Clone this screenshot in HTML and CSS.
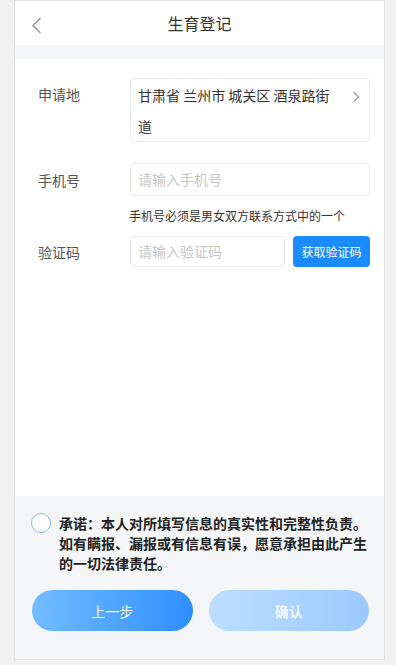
FILE: index.html
```html
<!DOCTYPE html>
<html lang="zh-CN">
<head>
  <meta charset="UTF-8" />
  <title>生育登记</title>
  <meta name="viewport" content="width=device-width, initial-scale=1.0" />
  <link rel="stylesheet" href="styles.css">
</head>
<body>
  <div class="phone">
    <div class="nav-bar">
      <span class="back">
        <svg width="12" height="17" viewBox="0 0 12 17"><path d="M10 1.5 L3 8.5 L10 15.5" fill="none" stroke="#9a9a9a" stroke-width="1.6" stroke-linecap="round" stroke-linejoin="round"/></svg>
      </span>
      <h1>生育登记</h1>
    </div>
    <div class="spacer"></div>

    <div class="form">
      <div class="row">
        <div class="label label-top">申请地</div>
        <div class="field address">
          <span class="address-text">甘肃省 兰州市 城关区 酒泉路街道</span>
          <svg class="arrow" width="8" height="12" viewBox="0 0 8 12"><path d="M2 1.5 L6.5 6 L2 10.5" fill="none" stroke="#a0a0a0" stroke-width="1.3" stroke-linecap="round" stroke-linejoin="round"/></svg>
        </div>
      </div>

      <div class="row row-phone">
        <div class="label">手机号</div>
        <div class="field input">请输入手机号</div>
      </div>
      <div class="hint">手机号必须是男女双方联系方式中的一个</div>

      <div class="row row-code">
        <div class="label">验证码</div>
        <div class="field input code-input">请输入验证码</div>
        <button class="code-btn">获取验证码</button>
      </div>
    </div>

    <div class="footer">
      <div class="promise">
        <span class="radio"></span>
        <p>承诺：本人对所填写信息的真实性和完整性负责。如有瞒报、漏报或有信息有误，愿意承担由此产生的一切法律责任。</p>
      </div>
      <div class="actions">
        <button class="btn btn-prev">上一步</button>
        <button class="btn btn-ok">确认</button>
      </div>
    </div>
  </div>
</body>
</html>
```

FILE: styles.css
```css
body {
  margin: 0;
  background: #f1f1f1;
  font-family: "Noto Sans CJK SC", "Noto Sans", sans-serif;
  color: #333;
}

.phone {
  width: 369px;
  height: 658px;
  margin-left: 14px;
  border: 1px solid #e2e2e2;
  background: #fff;
  display: flex;
  flex-direction: column;
}

.nav-bar {
  height: 44px;
  display: flex;
  align-items: center;
  justify-content: center;
  position: relative;
}

.back {
  position: absolute;
  left: 15px;
  top: 16px;
  display: flex;
}

.nav-bar h1 {
  margin: 0;
  font-size: 16px;
  font-weight: normal;
  color: #333;
}

.spacer {
  height: 14px;
  background: #f5f6f8;
}

.form {
  flex: 1;
  padding: 19px 14px 0 23px;
}

.row {
  display: flex;
  align-items: center;
}

.label {
  width: 92px;
  flex-shrink: 0;
  font-size: 14px;
  color: #555;
}

.row:first-child {
  align-items: flex-start;
}

.label-top {
  line-height: 31px;
  padding-top: 1px;
}

.field {
  flex: 1;
  box-sizing: border-box;
  border: 1px solid #ebebeb;
  border-radius: 4px;
  font-size: 14px;
}

.address {
  height: 64px;
  padding: 1px 30px 0 7px;
  line-height: 31px;
  color: #333;
  position: relative;
}

.address-text {
  display: block;
}

.arrow {
  position: absolute;
  right: 9px;
  top: 12px;
}

.row-phone {
  margin-top: 21px;
}

.input {
  height: 33px;
  line-height: 31px;
  padding-left: 7px;
  color: #c6c6c6;
}

.hint {
  margin: 12px 0 0 91px;
  font-size: 12px;
  line-height: 16px;
  color: #333;
}

.row-code {
  margin-top: 12px;
}

.code-input {
  height: 31px;
  line-height: 29px;
}

.code-btn {
  width: 77px;
  height: 31px;
  margin-left: 8px;
  border: none;
  border-radius: 4px;
  background: #1a8cff;
  color: #fff;
  font-family: inherit;
  font-size: 12px;
  padding: 0;
}

.footer {
  height: 163px;
  box-sizing: border-box;
  background: #f5f6f8;
  padding: 17px 15px 0 16px;
}

.promise {
  display: flex;
  align-items: flex-start;
}

.radio {
  flex-shrink: 0;
  width: 20px;
  height: 20px;
  box-sizing: border-box;
  border: 1.5px solid #7db9ff;
  border-radius: 50%;
  background: #fff;
  margin-top: 0;
}

.promise p {
  margin: 0 0 0 8px;
  font-size: 14px;
  line-height: 20px;
  font-weight: 600;
  color: #222;
}

.actions {
  display: flex;
  gap: 16px;
  margin-top: 17px;
  padding-left: 1px;
}

.btn {
  flex: 1;
  height: 41px;
  border: none;
  border-radius: 21px;
  font-family: inherit;
  font-size: 14px;
  color: #fff;
}

.btn-prev {
  background: linear-gradient(90deg, #73bcff, #2e8eff);
}

.btn-ok {
  background: linear-gradient(90deg, #bcdfff, #9bc9ff);
  color: rgba(255, 255, 255, 0.85);
  font-weight: 600;
}
```
